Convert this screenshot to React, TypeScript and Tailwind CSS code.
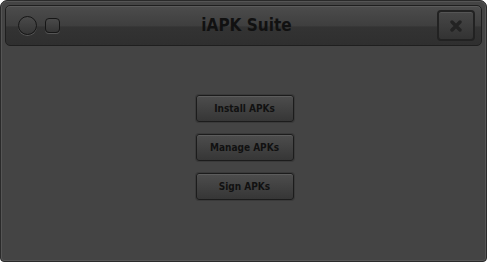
import React from 'react';

const buttons = ['Install APKs', 'Manage APKs', 'Sign APKs'];

export default function App() {
  return (
    <div className="w-[487px] h-[262px] bg-white" style={{ fontFamily: '"DejaVu Sans Condensed", "DejaVu Sans", sans-serif' }}>
      <div className="w-full h-full rounded-t-[7px] rounded-b-[4px] border border-[#2a2a2a] bg-[#444444] shadow-[inset_0_0_0_1px_#555] flex flex-col">
        {/* Title bar */}
        <div className="mx-[4px] mt-[4px] h-[41px] rounded-[5px] border border-[#1f1f1f] bg-[linear-gradient(to_bottom,#4c4c4c_0%,#3e3e3e_52%,#333333_53%,#2f2f2f_100%)] shadow-[inset_0_1px_0_#5a5a5a] flex items-center pl-[12px] pr-[6px]">
          <div className="flex items-center gap-[8px] w-[120px]">
            <div className="w-[19px] h-[19px] rounded-full border border-[#161616] bg-[linear-gradient(to_bottom,#4a4a4a,#353535)] shadow-[0_1px_0_#555]" />
            <div className="w-[15px] h-[15px] rounded-[4px] border border-[#161616] bg-[linear-gradient(to_bottom,#4a4a4a,#353535)] shadow-[0_1px_0_#555]" />
          </div>
          <div className="flex-1 text-center text-[17px] font-bold text-[#111]">iAPK Suite</div>
          <div className="w-[120px] flex justify-end">
            <div className="w-[38px] h-[31px] rounded-[4px] border-2 border-[#222] bg-[linear-gradient(to_bottom,#474747,#333333)] shadow-[inset_0_1px_0_#555] flex items-center justify-center">
              <svg width="12" height="12" viewBox="0 0 12 12">
                <path d="M2 2 L10 10 M10 2 L2 10" stroke="#232323" strokeWidth="3.4" strokeLinecap="round" />
              </svg>
            </div>
          </div>
        </div>

        {/* Actions */}
        <div className="flex flex-col items-center gap-[12px] pt-[49px] pl-[2px]">
          {buttons.map((label) => (
            <button
              key={label}
              className="w-[98px] h-[27px] rounded-[3px] border border-[#1c1c1c] bg-[linear-gradient(to_bottom,#4d4d4d,#363636)] shadow-[0_0_0_1px_#3a3a3a,inset_0_1px_0_#5c5c5c] text-[10px] font-bold text-[#111]"
            >
              {label}
            </button>
          ))}
        </div>
      </div>
    </div>
  );
}
